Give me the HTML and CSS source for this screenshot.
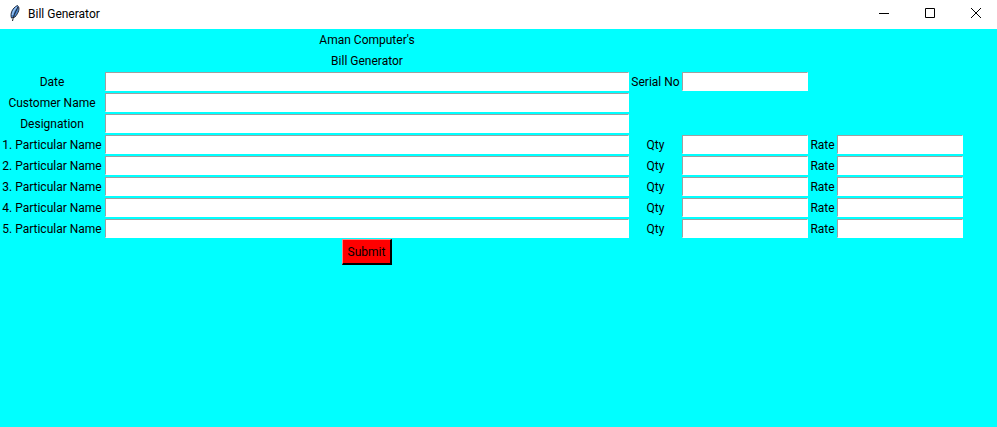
FILE: index.html
```
<!DOCTYPE html>
<html lang="en">
<head>
<meta charset="utf-8">
<title>Bill Generator</title>
<link rel="stylesheet" href="styles.css">
</head>
<body>
<header class="titlebar">
  <svg class="feather" width="16" height="18" viewBox="0 0 16 18" aria-hidden="true">
    <path d="M4.500 14C3 10 5 4 10.500 1.500C13.500 4 11.500 9 8 13Z" fill="#4b87cf" stroke="#26303f" stroke-width="1"/>
    <path d="M5.500 11C6 7 8 4.500 10 3" fill="none" stroke="#9cc5f2" stroke-width="1.500"/>
    <path d="M11 3C9 7 7 10 5.500 17" fill="none" stroke="#17191f" stroke-width="1"/>
  </svg>
  <span class="caption">Bill Generator</span>
  <div class="controls">
    <button type="button" class="control" aria-label="Minimize"><svg width="10" height="10" viewBox="0 0 10 10"><path d="M0 5.500H10"/></svg></button>
    <button type="button" class="control" aria-label="Maximize"><svg width="10" height="10" viewBox="0 0 10 10"><path d="M.5 .5H9.500V9.500H.5Z"/></svg></button>
    <button type="button" class="control" aria-label="Close"><svg width="10" height="10" viewBox="0 0 10 10"><path d="M0 0L10 10M10 0L0 10"/></svg></button>
  </div>
</header>
<main>
  <form class="bill">
    <h1 class="heading">Aman Computer's</h1>
    <h2 class="heading">Bill Generator</h2>

    <label class="first" for="date">Date</label><input id="date" type="text">
    <label for="serial">Serial No</label><input id="serial" type="text">
    <label class="first" for="customer">Customer Name</label><input id="customer" type="text">
    <label class="first" for="designation">Designation</label><input id="designation" type="text">

    <label class="first" for="name1">1. Particular Name</label><input id="name1" type="text">
    <label for="qty1">Qty</label><input id="qty1" type="text">
    <label for="rate1">Rate</label><input id="rate1" type="text">

    <label class="first" for="name2">2. Particular Name</label><input id="name2" type="text">
    <label for="qty2">Qty</label><input id="qty2" type="text">
    <label for="rate2">Rate</label><input id="rate2" type="text">

    <label class="first" for="name3">3. Particular Name</label><input id="name3" type="text">
    <label for="qty3">Qty</label><input id="qty3" type="text">
    <label for="rate3">Rate</label><input id="rate3" type="text">

    <label class="first" for="name4">4. Particular Name</label><input id="name4" type="text">
    <label for="qty4">Qty</label><input id="qty4" type="text">
    <label for="rate4">Rate</label><input id="rate4" type="text">

    <label class="first" for="name5">5. Particular Name</label><input id="name5" type="text">
    <label for="qty5">Qty</label><input id="qty5" type="text">
    <label for="rate5">Rate</label><input id="rate5" type="text">

    <button type="button" class="submit">Submit</button>
  </form>
</main>
</body>
</html>
```
FILE: styles.css
```
* {
  box-sizing: border-box;
}

body {
  margin: 0;
  min-height: 100vh;
  background: #00ffff;
  color: #000;
  font: 12px/19px Roboto, "Open Sans", sans-serif;
}

.titlebar {
  display: flex;
  align-items: center;
  height: 29px;
  padding-left: 7px;
  background: #fff;
}

.feather {
  margin-bottom: 4px;
}

.caption {
  margin-left: 5px;
}

.controls {
  display: flex;
  gap: 4px;
  margin-left: auto;
}

.control {
  display: flex;
  align-items: center;
  justify-content: center;
  width: 42px;
  height: 29px;
  padding: 0 0 3px;
  border: 0;
  background: none;
}

.control svg {
  fill: none;
  stroke: #000;
  stroke-width: 1;
  overflow: visible;
}

.bill {
  display: grid;
  grid-template-columns:
    104px minmax(0, 526px) 51px minmax(0, 128px) 27px minmax(0, 128px);
  grid-auto-rows: minmax(21px, auto);
  align-items: center;
}

.heading {
  grid-column: 2;
  margin: 0;
  padding-top: 2px;
  font-size: 12px;
  font-weight: 400;
  text-align: center;
}

.bill label {
  padding-top: 2px;
  text-align: center;
  white-space: nowrap;
}

.first {
  grid-column: 1;
}

.bill input {
  min-width: 0;
  height: 19px;
  margin: 0 1px;
  padding: 0 2px;
  border: 1px solid;
  border-color: #a0a0a0 #fff #fff #a0a0a0;
  background: #fff;
  font: inherit;
}

.submit {
  grid-column: 2;
  justify-self: center;
  width: 50px;
  height: 26px;
  padding: 2px 0 0;
  border: solid;
  border-width: 1px 2px 2px 1px;
  border-color: #ff8080 #000 #000 #ff8080;
  background: #f00;
  color: #000;
  font: inherit;
}
```
